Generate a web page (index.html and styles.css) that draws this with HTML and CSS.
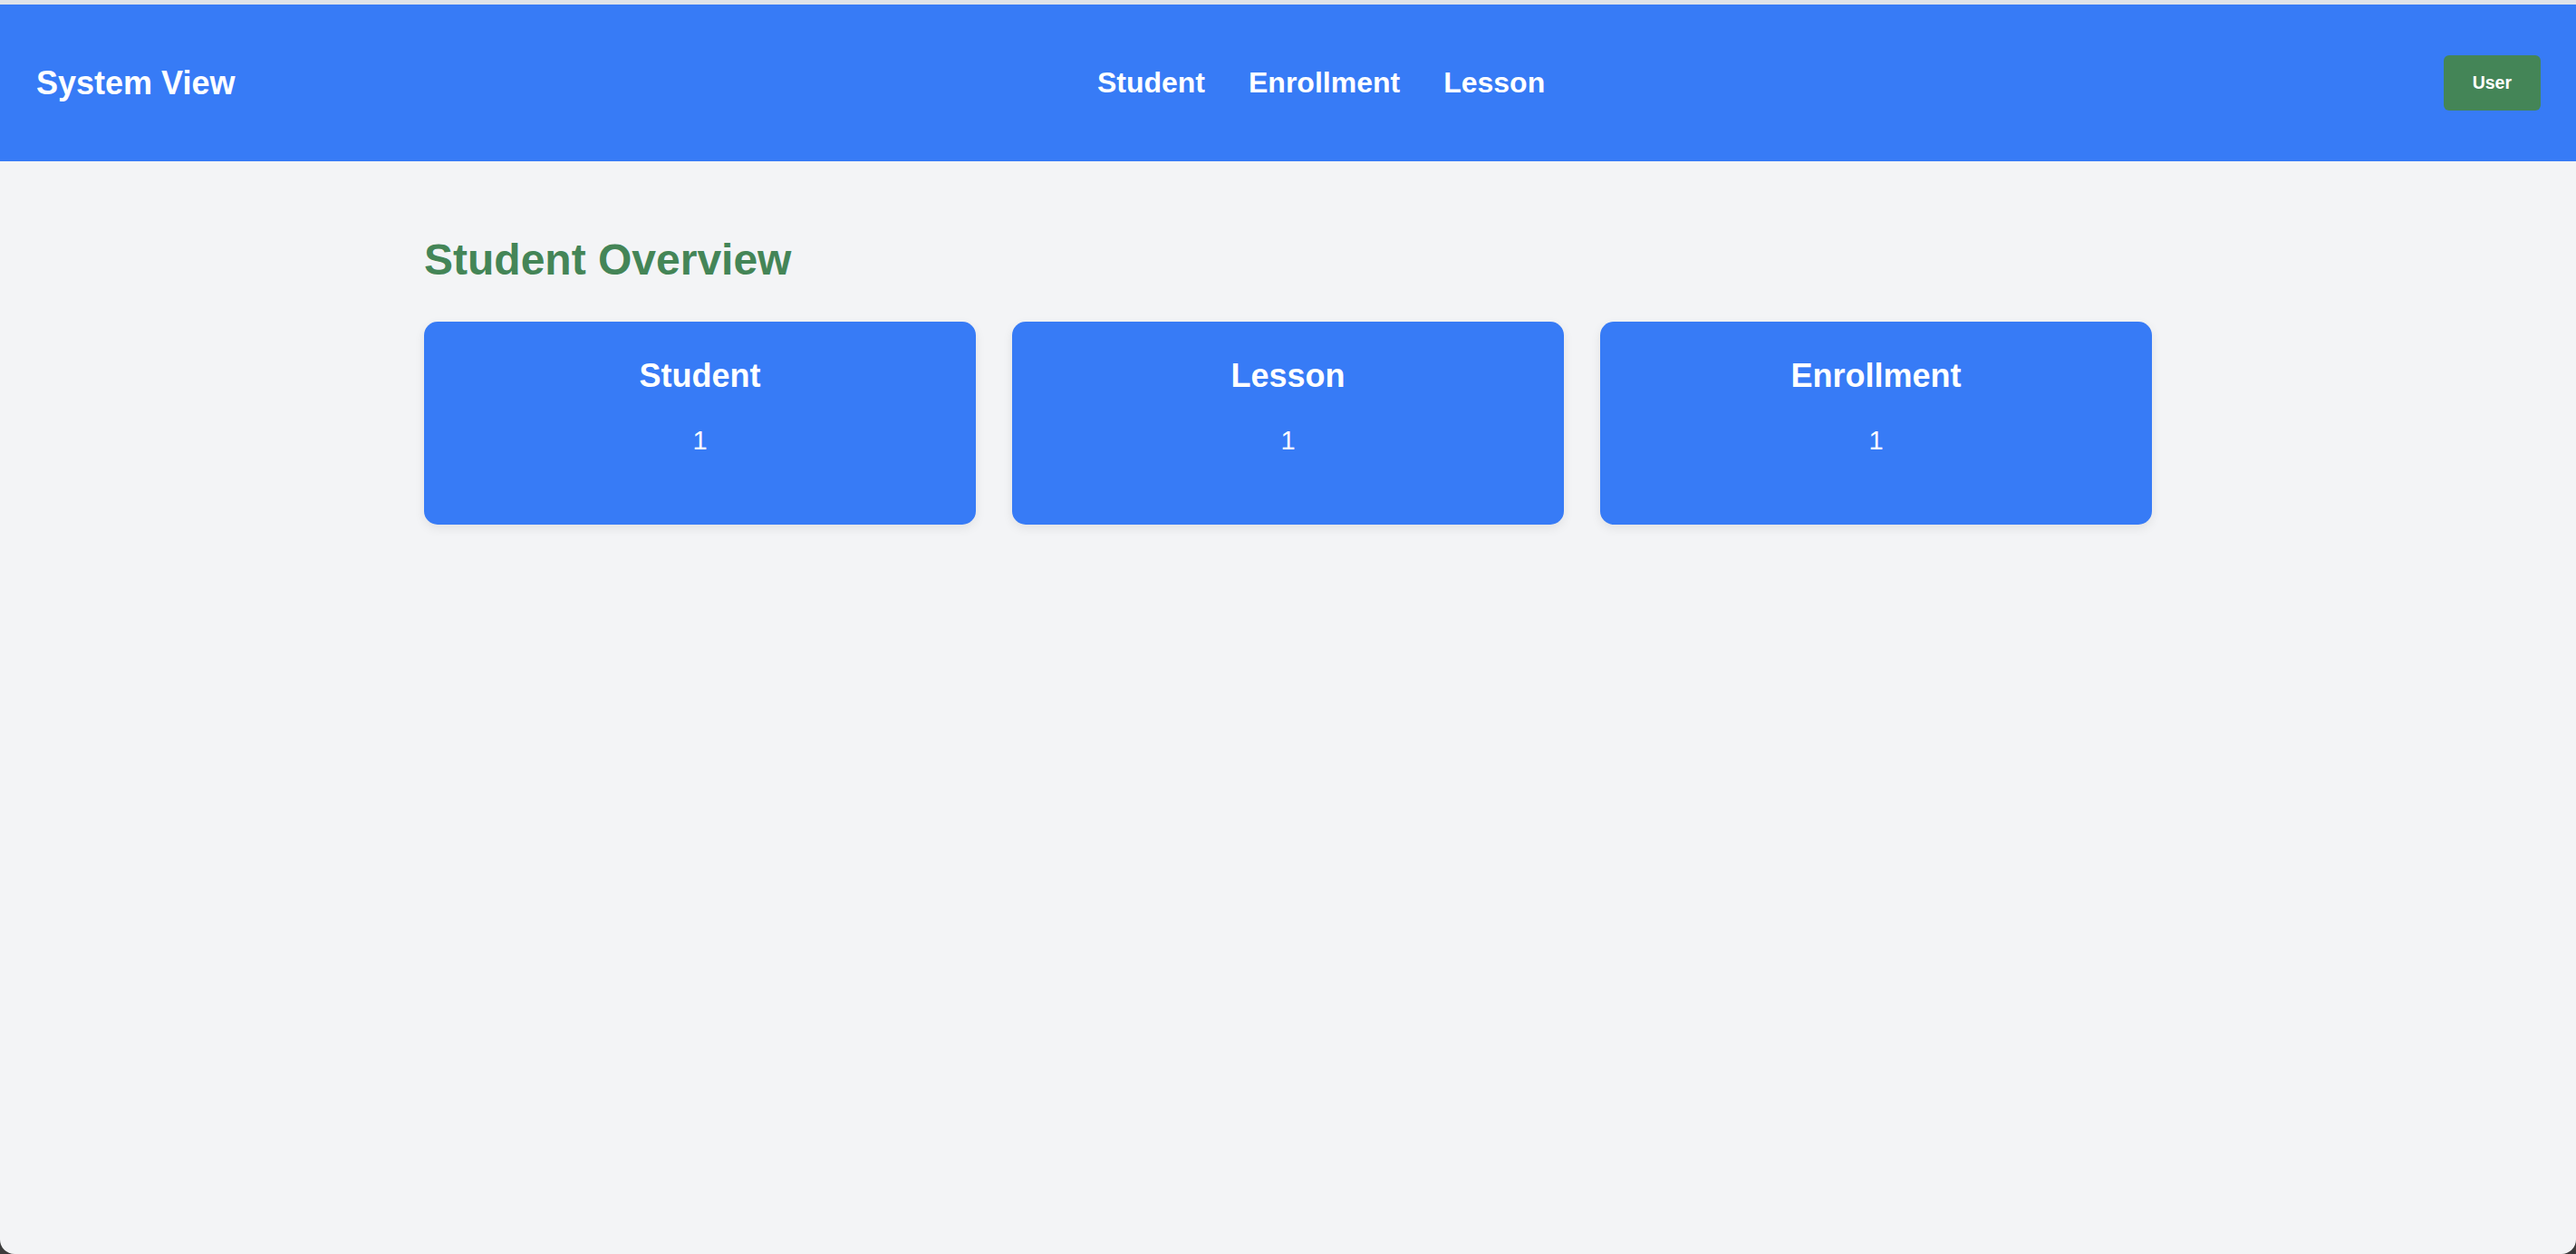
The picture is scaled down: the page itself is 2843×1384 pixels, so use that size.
FILE: index.html
```html
<!DOCTYPE html>
<html lang="en">
<head>
<meta charset="utf-8">
<title>System View</title>
<link rel="stylesheet" href="styles.css">
</head>
<body>
  <div class="app">
    <header class="topbar">
      <div class="brand">System View</div>
      <nav class="nav">
        <a class="nav-link" href="#">Student</a>
        <a class="nav-link" href="#">Enrollment</a>
        <a class="nav-link" href="#">Lesson</a>
      </nav>
      <button class="user-btn" type="button">User</button>
    </header>
    <main class="content">
      <h1 class="page-title">Student Overview</h1>
      <section class="cards">
        <div class="card">
          <h2 class="card-title">Student</h2>
          <p class="card-value">1</p>
        </div>
        <div class="card">
          <h2 class="card-title">Lesson</h2>
          <p class="card-value">1</p>
        </div>
        <div class="card">
          <h2 class="card-title">Enrollment</h2>
          <p class="card-value">1</p>
        </div>
      </section>
    </main>
  </div>
</body>
</html>
```

FILE: styles.css
```css
html {
  background: #3c3c3c;
}

body {
  margin: 0;
  font-family: "Liberation Sans", Arial, Helvetica, sans-serif;
}

.app {
  min-height: 100vh;
  box-sizing: border-box;
  background: #f3f4f6;
  border-top: 5px solid #dfe3e9;
  border-radius: 0 0 16px 16px;
  overflow: hidden;
}

.topbar {
  height: 173px;
  box-sizing: border-box;
  background: #377bf6;
  display: flex;
  align-items: center;
  justify-content: space-between;
  padding: 0 39px 0 40px;
}

.brand {
  color: #ffffff;
  font-size: 36px;
  font-weight: 700;
  line-height: 1.2;
}

.nav {
  display: flex;
  gap: 48px;
  margin-right: 40px;
}

.nav-link {
  color: #ffffff;
  text-decoration: none;
  font-size: 32px;
  font-weight: 700;
  line-height: 1.2;
}

.user-btn {
  height: 61px;
  padding: 0 32px;
  border: none;
  border-radius: 6px;
  background: #448557;
  color: #ffffff;
  font-family: "Liberation Sans", Arial, Helvetica, sans-serif;
  font-size: 19.5px;
  font-weight: 700;
  cursor: pointer;
}

.content {
  max-width: 1907px;
  margin: 0 auto;
  padding-top: 80px;
}

.page-title {
  margin: 0 0 39px;
  color: #448557;
  font-size: 48px;
  font-weight: 700;
  line-height: 1.2;
}

.cards {
  display: grid;
  grid-template-columns: repeat(3, 1fr);
  gap: 40px;
}

.card {
  height: 224px;
  box-sizing: border-box;
  padding-top: 38px;
  background: #377bf6;
  border-radius: 15px;
  box-shadow: 0 4px 12px rgba(0, 0, 0, 0.08);
  text-align: center;
  color: #ffffff;
}

.card-title {
  margin: 0;
  font-size: 36px;
  font-weight: 700;
  line-height: 1.2;
}

.card-value {
  margin: 33px 0 0;
  font-size: 29px;
  font-weight: 400;
  line-height: 1.2;
}
```
